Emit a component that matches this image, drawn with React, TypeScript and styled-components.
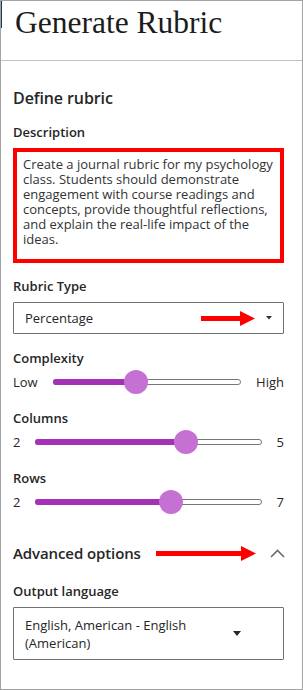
import { createGlobalStyle } from "styled-components";
import styled from "styled-components";

const GlobalStyle = createGlobalStyle`
  html, body {
    margin: 0;
    padding: 0;
    background: #fff;
  }
  body {
    font-family: "Open Sans", "Noto Sans", sans-serif;
    color: #262626;
  }
`;

const Panel = styled.div`
  position: relative;
  width: 303px;
  height: 690px;
  box-sizing: border-box;
  border: 1px solid #a3a3a3;
  background: #fff;
  overflow: hidden;
`;

const Header = styled.header`
  position: relative;
  height: 60px;
  box-sizing: border-box;
  border-bottom: 1px solid #c2c2c2;
  padding: 7px 0 0 14px;

  &::before {
    content: "";
    position: absolute;
    left: -1px;
    top: 0;
    width: 2px;
    height: 27px;
    background: #1d3557;
  }
`;

const Title = styled.h1`
  margin: 0;
  font-family: "Liberation Serif", "DejaVu Serif", serif;
  font-weight: 400;
  font-size: 31.5px;
  line-height: 30px;
  color: #1c1c1c;
`;

const Body = styled.div`
  display: flex;
  flex-direction: column;
  padding: 0 18px 0 12px;
`;

const SectionTitle = styled.h2<{ $top: number; $size: number }>`
  margin: ${(p) => p.$top}px 0 0;
  font-size: ${(p) => p.$size}px;
  line-height: 22px;
  font-weight: 600;
  letter-spacing: -0.1px;
  color: #262626;
`;

const Label = styled.div<{ $top: number }>`
  margin-top: ${(p) => p.$top}px;
  font-size: 13px;
  line-height: 18px;
  font-weight: 600;
  color: #262626;
`;

const DescriptionBox = styled.div`
  margin-top: 7px;
  height: 115px;
  box-sizing: border-box;
  border: 4px solid #ff0000;
  padding: 5px 6px;
  font-size: 13px;
  line-height: 15px;
  color: #333;
`;

const Select = styled.div<{ $height: number; $right: number }>`
  margin-top: 7px;
  height: ${(p) => p.$height}px;
  box-sizing: border-box;
  border: 1px solid #707070;
  border-radius: 1px;
  display: flex;
  align-items: center;
  padding: 0 ${(p) => p.$right}px 0 11px;
  font-size: 13px;
  line-height: 18px;
  color: #262626;
`;

const SelectValue = styled.span`
  max-width: 200px;
`;

const Arrow = styled.svg`
  display: block;
  margin-left: auto;
  flex: none;
`;

const Caret = styled.svg<{ $gap: number }>`
  display: block;
  flex: none;
  margin-left: ${(p) => p.$gap}px;
`;

const SliderRow = styled.div`
  margin-top: 3px;
  height: 24px;
  display: flex;
  align-items: center;
  gap: 15px;
  font-size: 13px;
  color: #262626;
`;

const Track = styled.div`
  position: relative;
  flex: 1;
  height: 6px;
  box-sizing: border-box;
  border: 1px solid #777;
  border-radius: 3px;
  background: #fff;
`;

const Fill = styled.div`
  position: absolute;
  left: -1px;
  top: -1px;
  bottom: -1px;
  border-radius: 3px;
  background: #a431b6;
`;

const Thumb = styled.div`
  position: absolute;
  top: 50%;
  width: 24px;
  height: 24px;
  border-radius: 50%;
  background: #c570d3;
  transform: translate(-50%, -50%);
`;

const AdvancedRow = styled.div`
  margin-top: 28px;
  display: flex;
  align-items: center;

  ${SectionTitle} {
    margin: 0;
  }
`;

const Chevron = styled.svg`
  display: block;
  flex: none;
  margin-left: 14px;
  margin-right: -1px;
`;

function RedArrow({ width }: { width: number }) {
  const head = 15;
  return (
    <Arrow width={width} height="15" viewBox={`0 0 ${width} 15`}>
      <rect x="0" y="5" width={width - head + 1} height="5" fill="#ff0000" />
      <polygon points={`${width - head},0 ${width},7.5 ${width - head},15`} fill="#ff0000" />
    </Arrow>
  );
}

function Slider({ min, max, value, left, right }: { min: number; max: number; value: number; left: string; right: string }) {
  const pct = ((value - min) / (max - min)) * 100;
  return (
    <SliderRow>
      <span>{left}</span>
      <Track>
        <Fill style={{ width: `calc(${pct}% + 1px)` }} />
        <Thumb style={{ left: `${pct}%` }} />
      </Track>
      <span>{right}</span>
    </SliderRow>
  );
}

export default function App() {
  return (
    <>
      <GlobalStyle />
      <Panel>
        <Header>
          <Title>Generate Rubric</Title>
        </Header>
        <Body>
          <SectionTitle $top={26} $size={16}>
            Define rubric
          </SectionTitle>

          <Label $top={14}>Description</Label>
          <DescriptionBox>
            Create a journal rubric for my psychology class. Students should demonstrate engagement with course
            readings and concepts, provide thoughtful reflections, and explain the real-life impact of the ideas.
          </DescriptionBox>

          <Label $top={14}>Rubric Type</Label>
          <Select $height={32} $right={11}>
            <SelectValue>Percentage</SelectValue>
            <RedArrow width={54} />
            <Caret $gap={11} width="6" height="4" viewBox="0 0 6 4">
              <polygon points="0,0 6,0 3,3.5" fill="#333" />
            </Caret>
          </Select>

          <Label $top={15}>Complexity</Label>
          <Slider min={0} max={100} value={44} left="Low" right="High" />

          <Label $top={15}>Columns</Label>
          <Slider min={2} max={5} value={4} left="2" right="5" />

          <Label $top={15}>Rows</Label>
          <Slider min={2} max={7} value={5} left="2" right="7" />

          <AdvancedRow>
            <SectionTitle $top={0} $size={15}>
              Advanced options
            </SectionTitle>
            <RedArrow width={100} />
            <Chevron width="15" height="9" viewBox="0 0 15 9">
              <polyline points="1,8 7.5,1.5 14,8" fill="none" stroke="#6b6b6b" strokeWidth="1.6" />
            </Chevron>
          </AdvancedRow>

          <Label $top={18}>Output language</Label>
          <Select $height={53} $right={13}>
            <SelectValue>English, American - English (American)</SelectValue>
            <Caret $gap={8} width="8" height="5" viewBox="0 0 8 5">
              <polygon points="0,0 8,0 4,5" fill="#262626" />
            </Caret>
          </Select>
        </Body>
      </Panel>
    </>
  );
}
